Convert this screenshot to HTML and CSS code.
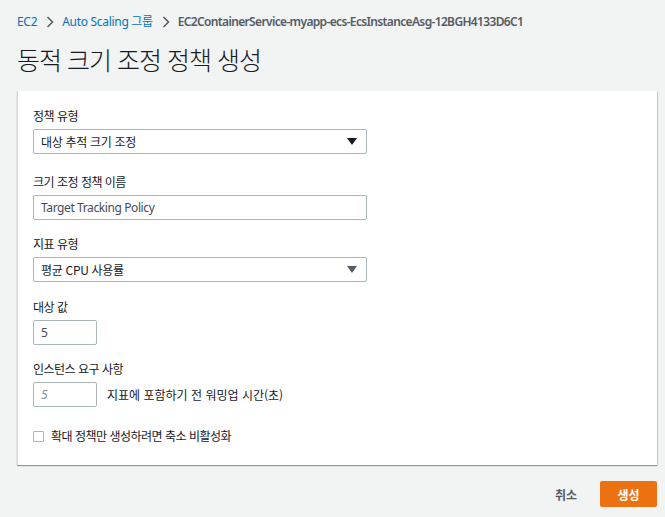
FILE: index.html
```html
<!DOCTYPE html>
<html lang="ko">
<head>
<meta charset="utf-8">
<link rel="stylesheet" href="styles.css">
</head>
<body>
<div class="page">
  <nav class="crumbs">
    <a class="crumb-link">EC2</a>
    <svg class="chev" width="8" height="12" viewBox="0 0 8 12"><path d="M1.5 1 L6.5 6 L1.5 11" fill="none" stroke="#545b64" stroke-width="1.5"/></svg>
    <a class="crumb-link">Auto Scaling 그룹</a>
    <svg class="chev" width="8" height="12" viewBox="0 0 8 12"><path d="M1.5 1 L6.5 6 L1.5 11" fill="none" stroke="#545b64" stroke-width="1.5"/></svg>
    <span class="crumb-current">EC2ContainerService-myapp-ecs-EcsInstanceAsg-12BGH4133D6C1</span>
  </nav>
  <h1 class="title">동적 크기 조정 정책 생성</h1>
  <section class="card">
    <div class="field f1">
      <div class="label">정책 유형</div>
      <div class="select wide">
        <span>대상 추적 크기 조정</span>
        <svg class="caret" width="10" height="7" viewBox="0 0 10 7"><path d="M0 0 H10 L5 7 Z" fill="#16191f"/></svg>
      </div>
    </div>
    <div class="field">
      <div class="label">크기 조정 정책 이름</div>
      <div class="input wide latin">Target Tracking Policy</div>
    </div>
    <div class="field f3">
      <div class="label">지표 유형</div>
      <div class="select wide">
        <span>평균 CPU 사용률</span>
        <svg class="caret" width="10" height="7" viewBox="0 0 10 7"><path d="M0 0 H10 L5 7 Z" fill="#545b64"/></svg>
      </div>
    </div>
    <div class="field">
      <div class="label">대상 값</div>
      <div class="input small latin">5</div>
    </div>
    <div class="field last">
      <div class="label">인스턴스 요구 사항</div>
      <div class="inline">
        <div class="input small placeholder">5</div>
        <span class="hint">지표에 포함하기 전 워밍업 시간(초)</span>
      </div>
    </div>
    <label class="check">
      <span class="box"></span>
      <span>확대 정책만 생성하려면 축소 비활성화</span>
    </label>
  </section>
  <div class="actions">
    <span class="cancel">취소</span>
    <span class="primary">생성</span>
  </div>
</div>
</body>
</html>
```

FILE: styles.css
```css
* { box-sizing: border-box; }
html, body { margin: 0; padding: 0; }
body {
  background: #f2f3f3;
  font-family: "Noto Sans", "Noto Sans CJK KR", sans-serif;
  color: #16191f;
  width: 665px;
  height: 517px;
  overflow: hidden;
}
.page {
  padding: 13px 8px 0 17px;
}
.crumbs {
  display: flex;
  align-items: center;
  height: 18px;
  font-size: 12px;
  line-height: 18px;
  white-space: nowrap;
}
.crumb-link {
  color: #0073bb;
  letter-spacing: -0.3px;
}
.chev {
  margin: 0 8px 0 9px;
}
.crumb-current {
  color: #545b64;
  font-weight: 600;
  font-size: 12px;
  letter-spacing: -0.65px;
}
.title {
  margin: 12px 0 0 0;
  font-weight: 300;
  font-size: 25px;
  line-height: 32px;
  letter-spacing: -1px;
  color: #16191f;
  font-family: "Noto Sans CJK KR", sans-serif;
}
.card {
  margin-top: 16px;
  width: 640px;
  height: 374px;
  background: #fff;
  border-left: 1px solid #d5dbdb;
  box-shadow: 0 1px 1px 0 rgba(0, 28, 36, 0.3), 1px 1px 1px 0 rgba(0, 28, 36, 0.15);
  padding: 17px 15px 0 15px;
}
.field {
  margin-bottom: 16px;
}
.field.f1 { margin-bottom: 20px; }
.field.f3 { margin-bottom: 17px; }
.field.last { margin-bottom: 0; }
.label {
  font-size: 12px;
  line-height: 16px;
  color: #16191f;
  margin-bottom: 5px;
  font-family: "Noto Sans CJK KR", sans-serif;
  letter-spacing: -0.5px;
}
.select, .input {
  height: 25px;
  border: 1px solid #aab7b8;
  border-radius: 2px;
  background: #fff;
  font-size: 12px;
  color: #16191f;
  padding: 0 7px;
  display: flex;
  align-items: center;
}
.latin {
  color: #444b55;
  letter-spacing: -0.4px;
}
.select span {
  flex: 1;
  font-family: "Noto Sans CJK KR", sans-serif;
  letter-spacing: -0.3px;
}
.wide { width: 334px; }
.small { width: 64px; }
.caret { margin-right: 2px; }
.placeholder {
  color: #879596;
  font-style: italic;
}
.inline {
  display: flex;
  align-items: center;
  gap: 10px;
}
.hint {
  font-size: 12px;
  font-family: "Noto Sans CJK KR", sans-serif;
  letter-spacing: 0;
  color: #16191f;
}
.check {
  display: flex;
  align-items: center;
  gap: 7px;
  margin-top: 21px;
  font-size: 12px;
  line-height: 16px;
  font-family: "Noto Sans CJK KR", sans-serif;
  letter-spacing: -0.5px;
}
.box {
  width: 11px;
  height: 11px;
  border: 1px solid #aab7b8;
  border-radius: 1px;
  background: #fff;
}
.actions {
  display: flex;
  justify-content: flex-end;
  align-items: center;
  width: 640px;
  margin-top: 16px;
}
.cancel {
  font-size: 12px;
  font-weight: 600;
  color: #545b64;
  margin-right: 23px;
  font-family: "Noto Sans CJK KR", sans-serif;
}
.primary {
  width: 57px;
  height: 26px;
  background: #ec7211;
  border-radius: 2px;
  color: #fff;
  font-weight: 700;
  font-size: 12px;
  display: flex;
  align-items: center;
  justify-content: center;
  font-family: "Noto Sans CJK KR", sans-serif;
}
```
